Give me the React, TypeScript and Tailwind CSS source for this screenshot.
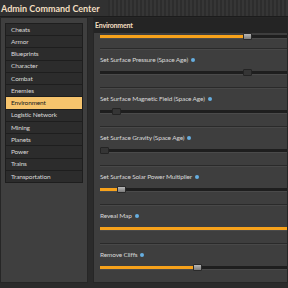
import React from "react";

const categories = [
  "Cheats",
  "Armor",
  "Blueprints",
  "Character",
  "Combat",
  "Enemies",
  "Environment",
  "Logistic Network",
  "Mining",
  "Planets",
  "Power",
  "Trains",
  "Transportation",
];

type Setting = {
  label: string;
  fill: number; // px of orange fill
  thumb: number | null; // px offset of thumb
  active: boolean;
};

const settings: Setting[] = [
  { label: "Set Surface Pressure (Space Age)", fill: 0, thumb: 143, active: false },
  { label: "Set Surface Magnetic Field (Space Age)", fill: 0, thumb: 12, active: false },
  { label: "Set Surface Gravity (Space Age)", fill: 0, thumb: 0, active: false },
  { label: "Set Surface Solar Power Multiplier", fill: 17, thumb: 17, active: true },
  { label: "Reveal Map", fill: 200, thumb: null, active: true },
  { label: "Remove Cliffs", fill: 93, thumb: 93, active: true },
];

function Slider({ fill, thumb, active }: { fill: number; thumb: number | null; active: boolean }) {
  return (
    <div className="relative h-[4px] w-full bg-[#1e1e1e] border-b border-[#4a4a4a]">
      {fill > 0 && (
        <div className="absolute left-0 top-0 h-[3px] bg-[#f7a21b]" style={{ width: fill }} />
      )}
      {thumb !== null && (
        <div
          className={
            active
              ? "absolute top-[-2px] h-[7px] w-[9px] rounded-[1px] border border-[#2a2a2a] bg-gradient-to-b from-[#b8b8b8] to-[#7c7c7c]"
              : "absolute top-[-2px] h-[7px] w-[9px] rounded-[1px] border border-[#242424] bg-[#353535]"
          }
          style={{ left: thumb }}
        />
      )}
    </div>
  );
}

export default function App() {
  return (
    <div className="w-[288px] h-[288px] overflow-hidden bg-[#2b2b2b] flex flex-col font-['Lato',sans-serif]">
      <div className="h-[17px] flex items-center bg-[#313131] border-b border-[#1c1c1c]">
        <span className="pl-[1px] pr-2 text-[9px] font-bold text-[#f3dfc1] leading-none">
          Admin Command Center
        </span>
        <div className="flex-1 h-full bg-[repeating-linear-gradient(90deg,#2d2d2d_0px,#2d2d2d_2px,#363636_2px,#363636_4px)]" />
      </div>

      <div className="flex flex-1 gap-[5px] pb-[5px]">
        <div className="w-[88px] bg-[#3f3f3f] border border-[#262626] pt-[5px] px-[4px] flex flex-col">
          <div className="h-[160px] flex flex-col bg-[#2c2c2c] border border-[#1e1e1e]">
            {categories.map((c) => (
              <div
                key={c}
                className={
                  c === "Environment"
                    ? "flex-1 flex items-center pl-[5px] text-[6.5px] tracking-[-0.15px] text-[#1a1a1a] bg-[#f6c46d] border-b border-[#1e1e1e]"
                    : "flex-1 flex items-center pl-[5px] text-[6.5px] tracking-[-0.15px] text-[#d8d8d8] border-b border-[#1e1e1e] last:border-b-0"
                }
              >
                {c}
              </div>
            ))}
          </div>
        </div>

        <div className="flex-1 flex flex-col bg-[#3e3e3e] border border-[#262626] overflow-hidden">
          <div className="h-[15px] flex items-center pl-[1px] bg-[#242424] text-[7px] tracking-[-0.2px] font-bold text-[#f3dfc1]">
            Environment
          </div>
          <div className="pl-[6px] flex flex-col">
            <div className="h-[15px] pt-[2px]">
              <Slider fill={143} thumb={143} active />
            </div>
            {settings.map((s) => (
              <div
                key={s.label}
                className="h-[39px] border-t border-[#2a2a2a] shadow-[inset_0_1px_0_#484848] flex flex-col"
              >
                <div className="h-[22px] flex items-center gap-[3px] text-[6.5px] tracking-[-0.15px] text-[#d8d8d8]">
                  {s.label}
                  <span className="w-[4px] h-[4px] rounded-full bg-[#66aee0]" />
                </div>
                <Slider fill={s.fill} thumb={s.thumb} active={s.active} />
              </div>
            ))}
          </div>
        </div>
      </div>
    </div>
  );
}
